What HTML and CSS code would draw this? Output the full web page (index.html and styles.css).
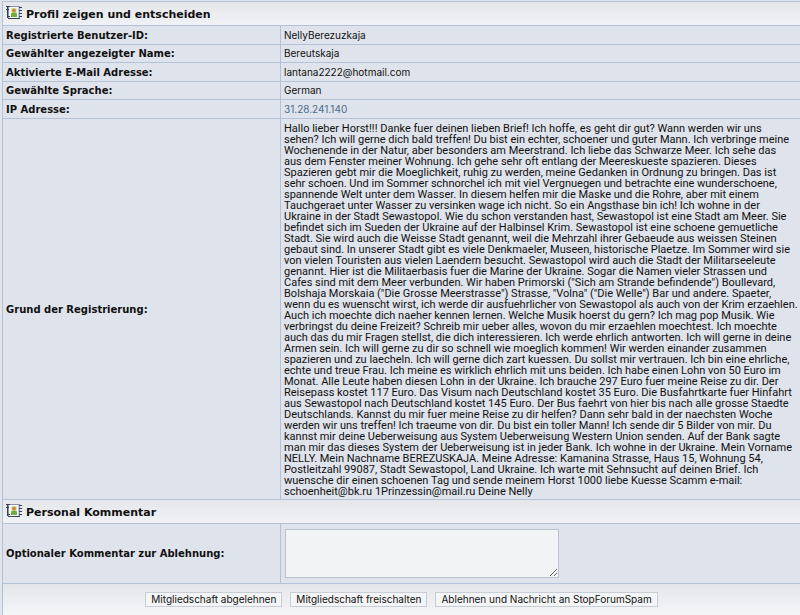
FILE: index.html
```html
<!DOCTYPE html>
<html lang="de">
<head>
    <meta charset="UTF-8">
    <meta name="viewport" content="width=device-width, initial-scale=1.0">
    <title>Profil zeigen und entscheiden</title>
    <link rel="stylesheet" href="styles.css">
</head>
<body>
    <svg width="0" height="0" class="defs">
        <!-- Adressbuch -->
        <symbol id="book" viewBox="0 0 16 16">
            <rect x="2.5" y="1.5" width="11" height="12" fill="#fff" stroke="#8592a8"/>
            <path d="M0 1.500h4M1.500 1v12M0 4.500h3M1 11.500h3M2 13.500h12" stroke="#35405a" fill="none"/>
            <rect x="5" y="3" width="6" height="9" fill="#dde8b8"/>
            <circle cx="8" cy="5.500" r="2" fill="#c98a3c"/>
            <path d="M5 12V9.500q0-2 3-2t3 2V12z" fill="#6fae3c"/>
            <path d="M12.500 2v11" stroke="#c3ccda"/>
            <path d="M13 2.500h3M13 5.500h3M13 8.500h3M13 11.500h3" stroke="#35405a"/>
        </symbol>
    </svg>
    <form action="#" method="post">
        <table class="profil">
            <tbody>
                <tr>
                    <th colspan="2" class="title"><h3><svg class="icon"><use href="#book"/></svg>Profil zeigen und entscheiden</h3></th>
                </tr>
                <tr class="row1">
                    <th scope="row">Registrierte Benutzer-ID:</th>
                    <td>NellyBerezuzkaja</td>
                </tr>
                <tr class="row2">
                    <th scope="row">Gewählter angezeigter Name:</th>
                    <td>Bereutskaja</td>
                </tr>
                <tr class="row1">
                    <th scope="row">Aktivierte E-Mail Adresse:</th>
                    <td>lantana2222@hotmail.com</td>
                </tr>
                <tr class="row2">
                    <th scope="row">Gewählte Sprache:</th>
                    <td>German</td>
                </tr>
                <tr class="row1">
                    <th scope="row">IP Adresse:</th>
                    <td><a href="#">31.28.241.140</a></td>
                </tr>
                <tr>
                    <th scope="row">Grund der Registrierung:</th>
                    <td class="message">Hallo lieber Horst!!! Danke fuer deinen lieben Brief! Ich hoffe, es geht dir gut? Wann werden wir uns
sehen? Ich will gerne dich bald treffen! Du bist ein echter, schoener und guter Mann. Ich verbringe meine
Wochenende in der Natur, aber besonders am Meerstrand. Ich liebe das Schwarze Meer. Ich sehe das
aus dem Fenster meiner Wohnung. Ich gehe sehr oft entlang der Meereskueste spazieren. Dieses
Spazieren gebt mir die Moeglichkeit, ruhig zu werden, meine Gedanken in Ordnung zu bringen. Das ist
sehr schoen. Und im Sommer schnorchel ich mit viel Vergnuegen und betrachte eine wunderschoene,
spannende Welt unter dem Wasser. In diesem helfen mir die Maske und die Rohre, aber mit einem
Tauchgeraet unter Wasser zu versinken wage ich nicht. So ein Angsthase bin ich! Ich wohne in der
Ukraine in der Stadt Sewastopol. Wie du schon verstanden hast, Sewastopol ist eine Stadt am Meer. Sie
befindet sich im Sueden der Ukraine auf der Halbinsel Krim. Sewastopol ist eine schoene gemuetliche
Stadt. Sie wird auch die Weisse Stadt genannt, weil die Mehrzahl ihrer Gebaeude aus weissen Steinen
gebaut sind. In unserer Stadt gibt es viele Denkmaeler, Museen, historische Plaetze. Im Sommer wird sie
von vielen Touristen aus vielen Laendern besucht. Sewastopol wird auch die Stadt der Militarseeleute
genannt. Hier ist die Militaerbasis fuer die Marine der Ukraine. Sogar die Namen vieler Strassen und
Cafes sind mit dem Meer verbunden. Wir haben Primorski ("Sich am Strande befindende") Boullevard,
Bolshaja Morskaia ("Die Grosse Meerstrasse") Strasse, "Volna" ("Die Welle") Bar und andere. Spaeter,
wenn du es wuenscht wirst, ich werde dir ausfuehrlicher von Sewastopol als auch von der Krim erzaehlen.
Auch ich moechte dich naeher kennen lernen. Welche Musik hoerst du gern? Ich mag pop Musik. Wie
verbringst du deine Freizeit? Schreib mir ueber alles, wovon du mir erzaehlen moechtest. Ich moechte
auch das du mir Fragen stellst, die dich interessieren. Ich werde ehrlich antworten. Ich will gerne in deine
Armen sein. Ich will gerne zu dir so schnell wie moeglich kommen! Wir werden einander zusammen
spazieren und zu laecheln. Ich will gerne dich zart kuessen. Du sollst mir vertrauen. Ich bin eine ehrliche,
echte und treue Frau. Ich meine es wirklich ehrlich mit uns beiden. Ich habe einen Lohn von 50 Euro im
Monat. Alle Leute haben diesen Lohn in der Ukraine. Ich brauche 297 Euro fuer meine Reise zu dir. Der
Reisepass kostet 117 Euro. Das Visum nach Deutschland kostet 35 Euro. Die Busfahrtkarte fuer Hinfahrt
aus Sewastopol nach Deutschland kostet 145 Euro. Der Bus faehrt von hier bis nach alle grosse Staedte
Deutschlands. Kannst du mir fuer meine Reise zu dir helfen? Dann sehr bald in der naechsten Woche
werden wir uns treffen! Ich traeume von dir. Du bist ein toller Mann! Ich sende dir 5 Bilder von mir. Du
kannst mir deine Ueberweisung aus System Ueberweisung Western Union senden. Auf der Bank sagte
man mir das dieses System der Ueberweisung ist in jeder Bank. Ich wohne in der Ukraine. Mein Vorname
NELLY. Mein Nachname BEREZUSKAJA. Meine Adresse: Kamanina Strasse, Haus 15, Wohnung 54,
Postleitzahl 99087, Stadt Sewastopol, Land Ukraine. Ich warte mit Sehnsucht auf deinen Brief. Ich
wuensche dir einen schoenen Tag und sende meinem Horst 1000 liebe Kuesse Scamm e-mail:
schoenheit@bk.ru 1Prinzessin@mail.ru Deine Nelly</td>
                </tr>
                <tr>
                    <th colspan="2" class="title"><h3><svg class="icon"><use href="#book"/></svg>Personal Kommentar</h3></th>
                </tr>
                <tr>
                    <th scope="row"><label for="comment">Optionaler Kommentar zur Ablehnung:</label></th>
                    <td class="comment"><textarea id="comment" name="comment"></textarea></td>
                </tr>
            </tbody>
        </table>
        <div class="buttons">
            <button type="submit">Mitgliedschaft abgelehnen</button>
            <button type="submit">Mitgliedschaft freischalten</button>
            <button type="submit">Ablehnen und Nachricht an StopForumSpam</button>
        </div>
    </form>
</body>
</html>
```
FILE: styles.css
```css
* {
    box-sizing: border-box;
}
body {
    margin: 0;
    padding: 1px 0 0 2px;
    min-height: 100vh;
    display: flex;
    background-color: #e1e5ec;
    font: 10px/11px Inter, sans-serif;
    color: #111;
}
.defs {
    position: absolute;
}
form {
    flex: 1;
    display: flex;
    flex-direction: column;
    border-left: 1px solid #b3c2d6;
}
.profil {
    width: 100%;
    border-spacing: 0;
    background-color: #dfe3eb;
}
th,
td {
    padding: 3px 1px 3px 3px;
    border-top: 1px solid #b3c2d6;
    text-align: left;
}
th {
    width: 277px;
    font: bold 10px/11px "DejaVu Sans", sans-serif;
}
td {
    border-left: 1px solid #b3c2d6;
}
.row1 {
    height: 19px;
}
.row2 {
    height: 18px;
}
.title {
    height: 24px;
    padding: 0 3px;
    background: linear-gradient(#e5e6ea, #f1f2f5);
}
h3 {
    display: flex;
    gap: 4px;
    margin: 0;
    padding-top: 3px;
    font-size: 11px;
    line-height: 20px;
}
.icon {
    width: 16px;
    height: 16px;
}
a {
    color: #476c8e;
    text-decoration: none;
}
.message {
    padding-top: 4px;
    padding-bottom: 2px;
    font: 11px/11px Roboto, sans-serif;
    white-space: pre-line;
}
.comment {
    padding: 5px 4px;
}
textarea {
    display: block;
    width: 274px;
    height: 49px;
    border: 1px solid #b9c1cd;
    background-color: #f2f3f5;
    font: inherit;
}
.buttons {
    flex: 1;
    display: flex;
    justify-content: center;
    align-items: flex-start;
    gap: 8px;
    padding: 8px 0;
    border-top: 1px solid #b3c2d6;
    background: linear-gradient(#e5e6ea, #f5f6f8);
}
button {
    height: 15px;
    padding: 0 5px;
    border: 1px solid #c9cdd5;
    background-color: #f4f5f7;
    font: inherit;
    color: #111;
}
```
